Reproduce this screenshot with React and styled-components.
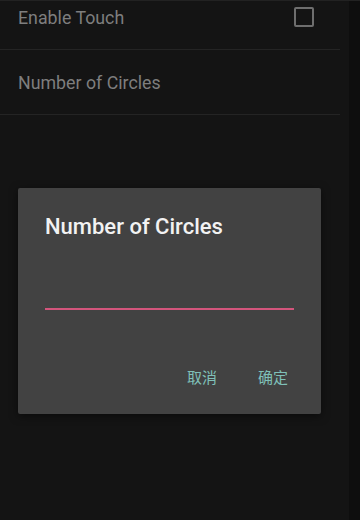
import React from "react";
import styled, { createGlobalStyle } from "styled-components";

const GlobalStyle = createGlobalStyle`
  html, body {
    margin: 0;
    padding: 0;
    background: #141414;
  }
  body {
    font-family: Roboto, "Noto Sans", "Noto Sans CJK SC", sans-serif;
  }
`;

export default function App() {
  return (
    <Screen>
      <GlobalStyle />
      <Main>
        <List>
          <Row>
            <RowLabel>Enable Touch</RowLabel>
            <CheckBox />
          </Row>
          <Row>
            <RowLabel>Number of Circles</RowLabel>
          </Row>
        </List>
        <Dialog>
          <DialogTitle>Number of Circles</DialogTitle>
          <Field />
          <Actions>
            <ActionButton>取消</ActionButton>
            <ActionButton>确定</ActionButton>
          </Actions>
        </Dialog>
      </Main>
      <SideStrip />
    </Screen>
  );
}

const Screen = styled.div`
  display: flex;
  width: 360px;
  height: 520px;
  overflow: hidden;
  background: #141414;
  border-top: 1px solid #222;
  box-sizing: border-box;
`;
const Main = styled.div`
  position: relative;
  flex: 1;
`;
const SideStrip = styled.div`
  width: 11px;
  background: #0e0e0e;
`;
const List = styled.div`
  margin-top: -16px;
  padding-right: 9px;
`;
const Row = styled.div`
  display: flex;
  align-items: center;
  justify-content: space-between;
  height: 64px;
  padding: 0 26px 0 18px;
  border-bottom: 1px solid #242424;
`;
const RowLabel = styled.span`
  font-size: 17.8px;
  color: #7e7e7e;
`;
const CheckBox = styled.span`
  width: 16px;
  height: 16px;
  border: 2px solid #6e6e6e;
  border-radius: 2px;
`;
const Dialog = styled.div`
  position: absolute;
  left: 18px;
  top: 187px;
  width: 303px;
  height: 226px;
  box-sizing: border-box;
  padding: 26px 27px 0 27px;
  background: #424242;
  border-radius: 2px;
  box-shadow: 0 2px 8px rgba(0, 0, 0, 0.5);
`;
const DialogTitle = styled.div`
  font-size: 22px;
  font-weight: 500;
  line-height: 26px;
  color: #f2f2f2;
`;
const Field = styled.div`
  margin-top: 68px;
  height: 2px;
  background: #d3557c;
`;
const Actions = styled.div`
  display: flex;
  justify-content: flex-end;
  gap: 41px;
  margin-top: 56px;
  padding-right: 6px;
`;
const ActionButton = styled.span`
  font-family: "Noto Sans CJK SC", sans-serif;
  font-size: 15px;
  color: #7fc0b8;
`;
